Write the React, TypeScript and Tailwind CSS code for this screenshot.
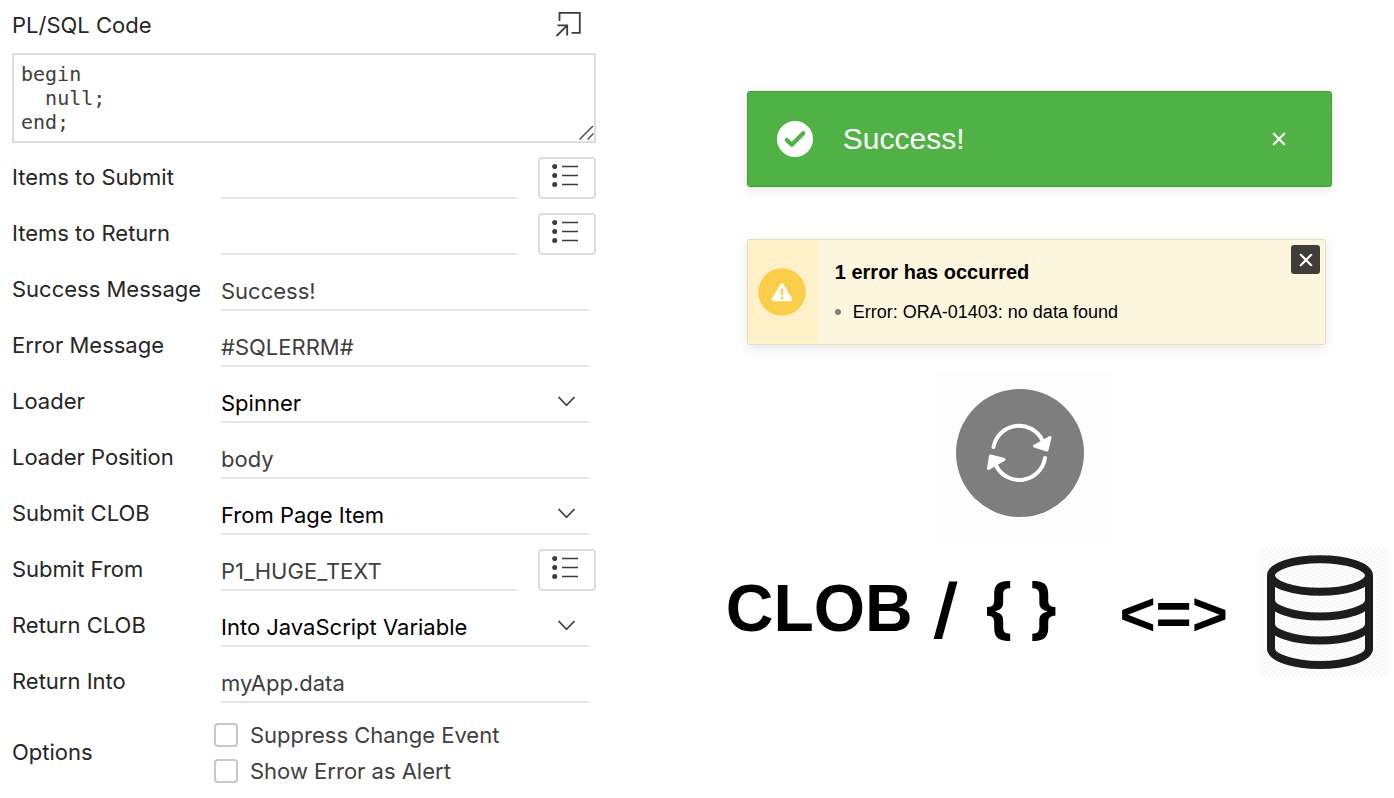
import type { ReactNode } from "react";

const underline =
  "h-[42px] w-full min-w-0 border-b-2 border-[#e4e4e4] bg-transparent outline-none";

function ListIcon() {
  return (
    <svg width="28" height="26" viewBox="0 0 28 26" aria-hidden="true">
      <g fill="#3c3c3c">
        <circle cx="2.700" cy="3.500" r="2.500" />
        <circle cx="2.700" cy="12.500" r="2.500" />
        <circle cx="2.700" cy="21.500" r="2.500" />
      </g>
      <path d="M10 3.500H26M10 12.500H26M10 21.500H26" stroke="#3c3c3c" strokeWidth="1.700" />
    </svg>
  );
}

function Row({ id, label, children }: { id: string; label: string; children: ReactNode }) {
  return (
    <div className="flex items-center pt-3.5">
      <label htmlFor={id} className="w-[209px] shrink-0 pb-0.5 whitespace-nowrap text-[#262626]">
        {label}
      </label>
      {children}
    </div>
  );
}

function TextRow({ id, label, value }: { id: string; label: string; value: string }) {
  return (
    <Row id={id} label={label}>
      <div className="min-w-0 flex-1 pr-[7px]">
        <input id={id} type="text" defaultValue={value} className={`${underline} pt-1 text-[#404040]`} />
      </div>
    </Row>
  );
}

function ListRow({ id, label, value }: { id: string; label: string; value: string }) {
  return (
    <Row id={id} label={label}>
      <div className="flex min-w-0 flex-1 gap-[21px]">
        <input id={id} type="text" defaultValue={value} className={`${underline} pt-1 text-[#404040]`} />
        <button
          type="button"
          aria-label={`Pick ${label}`}
          className="flex h-[42px] w-[58px] shrink-0 justify-center rounded border-2 border-[#dcdcdc] bg-white pt-1 pr-0.5"
        >
          <ListIcon />
        </button>
      </div>
    </Row>
  );
}

function SelectRow({ id, label, value }: { id: string; label: string; value: string }) {
  return (
    <Row id={id} label={label}>
      <div className="relative min-w-0 flex-1 pr-[7px]">
        <select id={id} defaultValue={value} className={`${underline} appearance-none pt-1 text-black`}>
          <option>{value}</option>
        </select>
        <svg
          className="pointer-events-none absolute top-[14px] right-[20px]"
          width="20"
          height="14"
          viewBox="0 0 20 14"
          aria-hidden="true"
        >
          <path d="M2.500 2L10.500 10.300L18.500 2" fill="none" stroke="#404040" strokeWidth="1.800" />
        </svg>
      </div>
    </Row>
  );
}

function CheckOption({ label }: { label: string }) {
  return (
    <label className="flex h-9 items-center gap-3 text-[#404040]">
      <input
        type="checkbox"
        className="size-6 shrink-0 appearance-none rounded border-2 border-[#c8c8c8] bg-white checked:bg-[#c8c8c8]"
      />
      {label}
    </label>
  );
}

function CloseIcon() {
  return (
    <svg width="14" height="14" viewBox="0 0 14 14" aria-hidden="true">
      <path d="M1.800 1.800L12.200 12.200M12.200 1.800L1.800 12.200" stroke="#fff" strokeWidth="2.200" strokeLinecap="round" />
    </svg>
  );
}

function SettingsForm() {
  return (
    <form className="w-[43.6%] shrink-0 pr-3 pl-3 font-['Inter',sans-serif] text-[22px] leading-[30px]">
      <div className="flex h-[53px] items-center justify-between pr-3.5 pb-1">
        <label htmlFor="code" className="text-[#262626]">
          PL/SQL Code
        </label>
        <button type="button" aria-label="Open code editor">
          <svg width="28" height="28" viewBox="0 0 28 28" aria-hidden="true">
            <path
              d="M5.500 10V1.800H25.800V21.800H17.500M2.500 25L13.200 14.300M3.500 14.300H13.200V24.500"
              fill="none"
              stroke="#3c3c3c"
              strokeWidth="1.800"
            />
          </svg>
        </button>
      </div>
      <div className="relative">
        <textarea
          id="code"
          rows={3}
          defaultValue={"begin\n  null;\nend;"}
          spellCheck={false}
          className="block h-[90px] w-full resize-none overflow-hidden border-2 border-[#dcdcdc] px-[7px] py-[7px] font-['DejaVu_Sans_Mono',monospace] text-[20px] leading-6 text-[#404040] outline-none"
        />
        <svg className="absolute right-0.5 bottom-0.5" width="16" height="16" viewBox="0 0 16 16" aria-hidden="true">
          <path d="M1.500 14.500L15 1M9.500 14.500L15.500 8.500" stroke="#505050" strokeWidth="1.500" />
        </svg>
      </div>
      <ListRow id="submit" label="Items to Submit" value="" />
      <ListRow id="return" label="Items to Return" value="" />
      <TextRow id="success" label="Success Message" value="Success!" />
      <TextRow id="error" label="Error Message" value="#SQLERRM#" />
      <SelectRow id="loader" label="Loader" value="Spinner" />
      <TextRow id="position" label="Loader Position" value="body" />
      <SelectRow id="submit-clob" label="Submit CLOB" value="From Page Item" />
      <ListRow id="submit-from" label="Submit From" value="P1_HUGE_TEXT" />
      <SelectRow id="return-clob" label="Return CLOB" value="Into JavaScript Variable" />
      <TextRow id="return-into" label="Return Into" value="myApp.data" />
      <fieldset className="flex items-center pt-3.5" aria-labelledby="options">
        <span id="options" className="w-[202px] shrink-0 pb-0.5 text-[#262626]">
          Options
        </span>
        <div>
          <CheckOption label="Suppress Change Event" />
          <CheckOption label="Show Error as Alert" />
        </div>
      </fieldset>
    </form>
  );
}

function SuccessAlert() {
  return (
    <div
      role="status"
      className="flex h-24 items-center rounded-[3px] border border-[#409f37] bg-[#50b244] pr-[45px] pl-[29px] text-white shadow-[0_3px_12px_rgba(0,0,0,0.1)]"
    >
      <svg width="36" height="36" viewBox="0 0 36 36" aria-hidden="true">
        <circle cx="18" cy="18" r="18" fill="#fff" />
        <path
          d="M9.800 19L14.800 23.800L26.200 12.200"
          fill="none"
          stroke="#50b244"
          strokeWidth="4.200"
          strokeLinecap="round"
          strokeLinejoin="round"
        />
      </svg>
      <p className="ml-[30px] flex-1 text-[30px] leading-9">Success!</p>
      <button type="button" aria-label="Dismiss success message">
        <CloseIcon />
      </button>
    </div>
  );
}

function ErrorAlert() {
  return (
    <div
      role="alert"
      className="mt-[52px] mr-1.5 flex h-[106px] rounded-[3px] border border-[#e6dcbb] bg-[#fdf6de] text-black shadow-[0_3px_12px_rgba(0,0,0,0.1)]"
    >
      <div className="flex w-[70px] shrink-0 items-center justify-center bg-[#fef0c8] pr-0.5">
        <svg width="48" height="48" viewBox="0 0 48 48" aria-hidden="true">
          <circle cx="24" cy="24" r="23.700" fill="#fbce4a" />
          <path d="M24 17L15.500 31.500H32.500Z" fill="#fff" stroke="#fff" strokeWidth="3.500" strokeLinejoin="round" />
          <path d="M24 21.500V26" stroke="#fbce4a" strokeWidth="2.400" strokeLinecap="round" />
          <circle cx="24" cy="30" r="1.400" fill="#fbce4a" />
        </svg>
      </div>
      <div className="min-w-0 flex-1 pt-5 pl-[17px]">
        <h2 className="text-[20px] leading-6 font-bold">1 error has occurred</h2>
        <ul className="mt-4">
          <li className="flex items-center gap-3 text-[18px] leading-6">
            <span className="size-1.5 rounded-full bg-[#84807a]" />
            Error: ORA-01403: no data found
          </li>
        </ul>
      </div>
      <button
        type="button"
        aria-label="Dismiss error message"
        className="mt-[5px] mr-[5px] flex size-[29px] items-center justify-center rounded-[3px] bg-[#403e38]"
      >
        <CloseIcon />
      </button>
    </div>
  );
}

function Spinner() {
  return (
    <div className="mx-auto mt-[26px] h-[166px] w-44 bg-[#fdfdfd] pt-[18px] pl-5">
      <svg width="128" height="128" viewBox="0 0 128 128" role="img" aria-label="Loading">
        <circle cx="64" cy="64" r="64" fill="#7e7e7e" />
        <path
          d="M37.500 58A26 26 0 0 1 86.500 51.500M89 69A26 26 0 0 1 40 76.500"
          fill="none"
          stroke="#fff"
          strokeWidth="4"
          strokeLinecap="round"
        />
        <path
          d="M78.500 57L94 48.500L91 61ZM34.500 67L48 70.500L32.500 79.500Z"
          fill="#fff"
          stroke="#fff"
          strokeWidth="3"
          strokeLinejoin="round"
        />
      </svg>
    </div>
  );
}

function Database() {
  return (
    <svg width="128" height="128" viewBox="0 0 128 128" role="img" aria-label="Database" className="shrink-0">
      <defs>
        <pattern id="hatch" width="4" height="4" patternUnits="userSpaceOnUse">
          <path d="M-1 1L1 -1M0 4L4 0M3 5L5 3" stroke="#f1f1f1" strokeWidth="1" />
        </pattern>
      </defs>
      <rect width="128" height="128" fill="url(#hatch)" />
      <g fill="none" stroke="#1d1d1b" strokeWidth="8">
        <ellipse cx="60" cy="27.500" rx="49" ry="16.300" />
        <path d="M11 52C11 61 33 68.500 60 68.500S109 61 109 52" />
        <path d="M11 76C11 85 33 92.500 60 92.500S109 85 109 76" />
        <path d="M11 27.500V100.500C11 109.500 33 117 60 117S109 109.500 109 100.500V27.500" />
      </g>
    </svg>
  );
}

export default function App() {
  return (
    <main className="flex min-h-screen bg-white">
      <SettingsForm />
      <section className="min-w-0 flex-1 pt-[91px] font-['Liberation_Sans',Arial,sans-serif]">
        <div className="pr-[62px] pl-[139px]">
          <SuccessAlert />
          <ErrorAlert />
        </div>
        <div className="pl-[46px]">
          <Spinner />
        </div>
        <div className="mt-[11px] flex items-center pr-1.5 pl-[118px] font-bold whitespace-nowrap text-black">
          <p className="flex items-center gap-5 pb-2 text-[66px] leading-[80px]">
            <span>CLOB</span>
            <span className="font-['Inter',sans-serif]">/</span>
            <span className="ml-1 font-['Inter',sans-serif]">{"{ }"}</span>
          </p>
          <p className="mr-8 ml-auto pt-1 text-[62px] leading-[80px]">{"<=>"}</p>
          <Database />
        </div>
      </section>
    </main>
  );
}
